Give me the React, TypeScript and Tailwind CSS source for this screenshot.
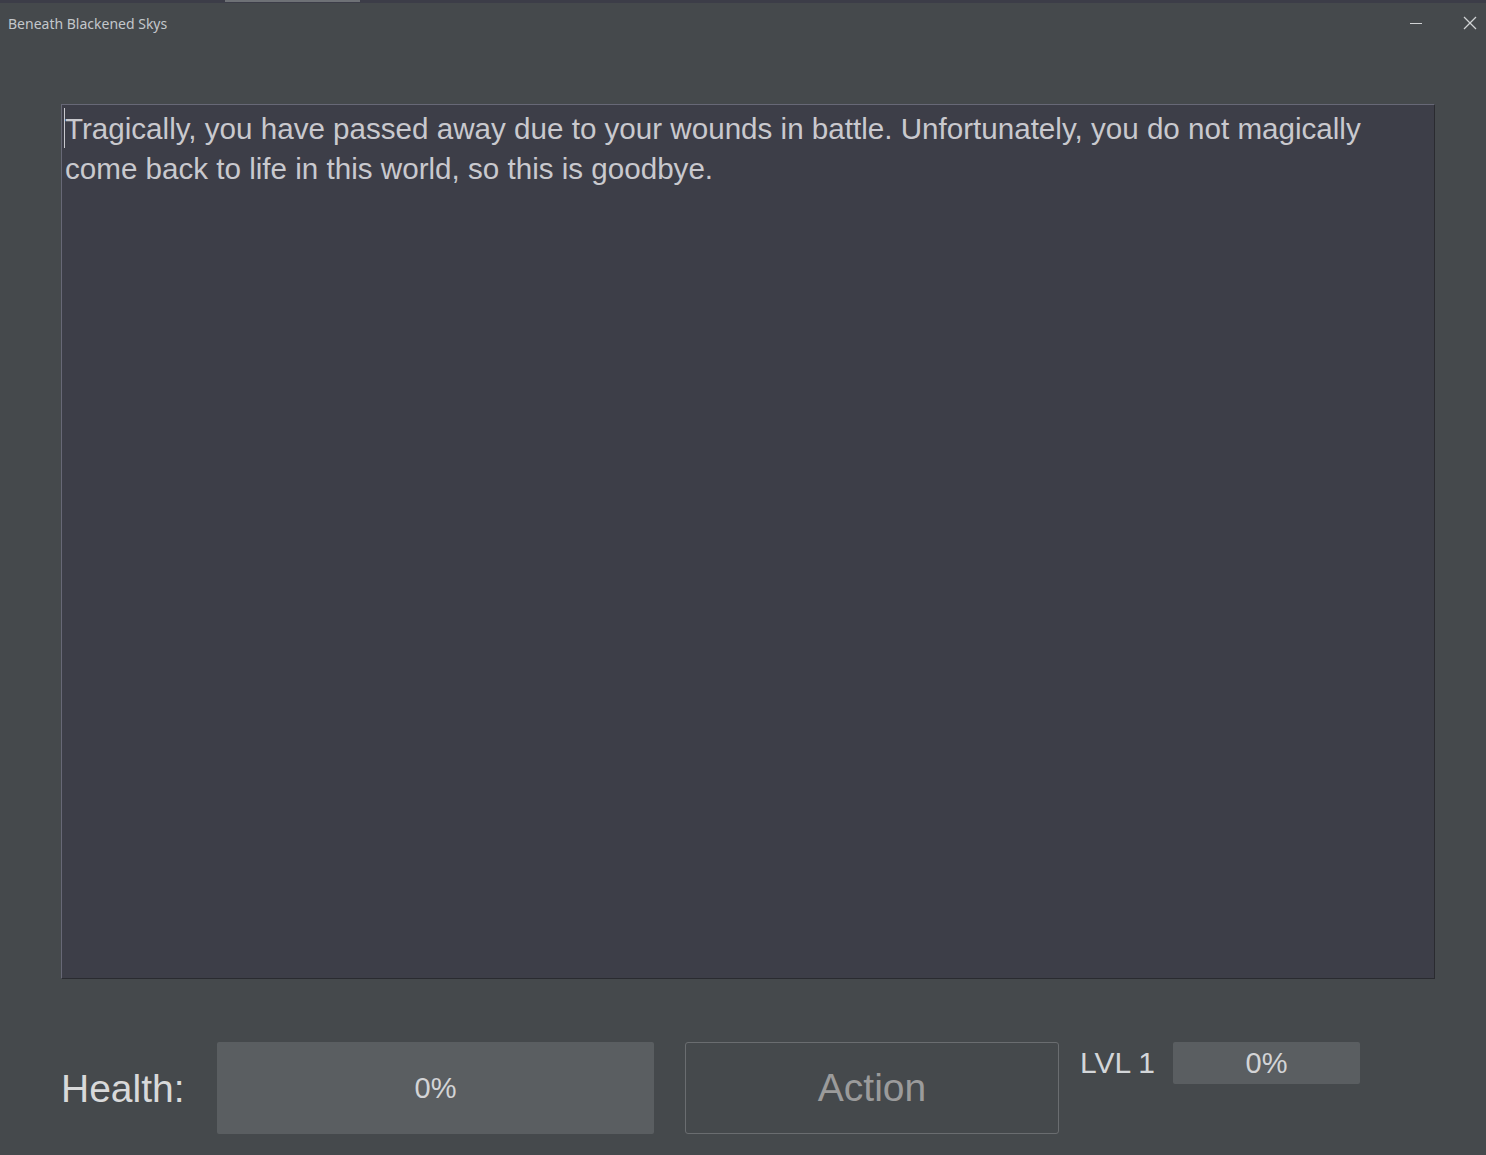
export default function App() {
  const sans = { fontFamily: '"Liberation Sans", Arial, sans-serif' };
  return (
    <div className="w-[1486px] h-[1155px] bg-[#45494c] flex flex-col overflow-hidden" style={sans}>
      {/* top strip */}
      <div className="h-[3px] bg-[#3c3d48] flex">
        <div className="ml-[225px] w-[135px] h-[2px] bg-[#6e7176]" />
      </div>
      {/* title bar */}
      <div className="h-[41px] flex items-center justify-between">
        <span
          className="ml-[8px] text-[14px] text-[#c3c7cb] leading-none"
          style={{ fontFamily: '"Noto Sans", "Open Sans", sans-serif' }}
        >
          Beneath Blackened Skys
        </span>
        <div className="flex items-center -mt-[2px]">
          <svg width="14" height="14" viewBox="0 0 14 14" className="mr-[40px]">
            <line x1="1" y1="7.5" x2="13" y2="7.5" stroke="#d0d2d4" strokeWidth="1" />
          </svg>
          <svg width="14" height="14" viewBox="0 0 14 14" className="mr-[9px]">
            <line x1="1" y1="1" x2="13" y2="13" stroke="#d0d2d4" strokeWidth="1.2" />
            <line x1="13" y1="1" x2="1" y2="13" stroke="#d0d2d4" strokeWidth="1.2" />
          </svg>
        </div>
      </div>
      {/* text panel */}
      <div className="ml-[61px] mt-[60px] w-[1374px] h-[875px] bg-[#3d3e48] border-t border-l border-t-[#676876] border-l-[#676876] border-r border-b border-r-[#2a2b30] border-b-[#2a2b30] pt-[3px] pl-[2px]">
        <div className="relative text-[29.6px] leading-[40px] text-[#c9c9ce]">
          <span className="absolute left-0 top-0 w-px h-[40px] bg-[#c9c9ce]" />
          <p className="pl-[1px] pt-[1px]">
            Tragically, you have passed away due to your wounds in battle. Unfortunately, you do not magically
            <br />
            come back to life in this world, so this is goodbye.
          </p>
        </div>
      </div>
      {/* bottom row */}
      <div className="ml-[61px] mt-[63px] flex items-start">
        <div className="w-[156px] h-[92px] flex items-center">
          <span className="text-[39px] leading-none text-[#d8d9da]">Health:</span>
        </div>
        <div className="w-[437px] h-[92px] bg-[#5a5e61] rounded-[2px] flex items-center justify-center">
          <span className="text-[29px] leading-none text-[#d3d4d6]">0%</span>
        </div>
        <div className="ml-[31px] w-[374px] h-[92px] border border-[#6a6d70] rounded-[3px] flex items-center justify-center">
          <span className="text-[39px] leading-none text-[#9b9b9b] -mt-[1px]">Action</span>
        </div>
        <div className="ml-[21px] w-[93px] h-[42px] flex items-center">
          <span className="text-[30px] leading-none text-[#d3d6d9]">LVL 1</span>
        </div>
        <div className="w-[187px] h-[42px] bg-[#5a5e61] rounded-[2px] flex items-center justify-center">
          <span className="text-[29px] leading-none text-[#d3d4d6]">0%</span>
        </div>
      </div>
    </div>
  );
}
